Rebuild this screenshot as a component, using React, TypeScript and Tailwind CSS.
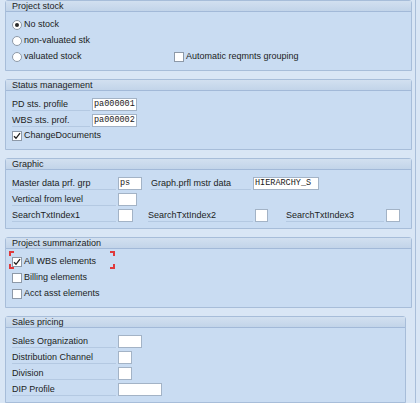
import type { ReactNode } from "react";

function Group({ title, children, className = "" }: { title: string; children: ReactNode; className?: string }) {
  return (
    <div className={`rounded-t-[3px] border border-[#a7bdd9] bg-[#c9dcf2] ${className}`}>
      <div className="h-[11px] border-b border-[#a2b9d8] bg-gradient-to-b from-[#d2e0f0] to-[#c2d4e9] pl-[6px] leading-[11px]">
        {title}
      </div>
      <div className="pb-[5px] pl-[6px] pt-[5px]">{children}</div>
    </div>
  );
}

function Row({ children, className = "" }: { children: ReactNode; className?: string }) {
  return <div className={`flex h-[16px] items-center ${className}`}>{children}</div>;
}

function Label({ text, w }: { text: string; w: number }) {
  return (
    <span
      className="mr-[2px] h-[13px] shrink-0 border-b border-[#b4c9e2] leading-[12px] whitespace-nowrap"
      style={{ width: w }}
    >
      {text}
    </span>
  );
}

function Field({ value = "", w }: { value?: string; w: number }) {
  return (
    <span
      className="h-[13px] shrink-0 border border-[#a3b3c6] bg-white pl-[1px] font-['Liberation_Mono',monospace] text-[8.5px] leading-[11px] text-[#222]"
      style={{ width: w }}
    >
      {value}
    </span>
  );
}

function Radio({ on = false }: { on?: boolean }) {
  return (
    <span className="mr-[2px] flex h-[10px] w-[10px] shrink-0 items-center justify-center rounded-full border border-[#8d99a8] bg-white">
      {on && <span className="h-[4px] w-[4px] rounded-full bg-[#2a2a2a]" />}
    </span>
  );
}

function Check({ on = false }: { on?: boolean }) {
  return (
    <span className="mr-[2px] flex h-[10px] w-[10px] shrink-0 items-center justify-center border border-[#8d99a8] bg-white">
      {on && (
        <svg width="8" height="8" viewBox="0 0 8 8">
          <path d="M1 4.2 L3 6.3 L7 1.2" fill="none" stroke="#1f1f1f" strokeWidth="1.3" />
        </svg>
      )}
    </span>
  );
}

function FocusMarks() {
  const c = "absolute h-[5px] w-[5px] border-[#e0393b]";
  return (
    <span className="pointer-events-none absolute left-[-3px] top-[-3px] h-[18px] w-[106px]">
      <span className={`${c} left-0 top-0 border-l-2 border-t-2`} />
      <span className={`${c} right-0 top-0 border-r-2 border-t-2`} />
      <span className={`${c} bottom-0 left-0 border-b-2 border-l-2`} />
      <span className={`${c} bottom-0 right-0 border-b-2 border-r-2`} />
    </span>
  );
}

export default function App() {
  return (
    <div className="h-[403px] w-[420px] overflow-hidden bg-[#d9e6f5] font-['Liberation_Sans',Arial,sans-serif] text-[9px] text-[#1c1c1c]">
      <div className="flex h-full w-[416px] flex-col gap-2 border-r border-[#a9bed9] pl-[5px] pr-[3px]">
        <Group title="Project stock">
          <Row>
            <Radio on />
            No stock
          </Row>
          <Row>
            <Radio />
            non-valuated stk
          </Row>
          <Row>
            <span className="flex w-[162px] items-center">
              <Radio />
              valuated stock
            </span>
            <Check />
            Automatic reqmnts grouping
          </Row>
        </Group>

        <Group title="Status management">
          <Row>
            <Label text="PD sts. profile" w={78} />
            <Field value="pa000001" w={45} />
          </Row>
          <Row>
            <Label text="WBS sts. prof." w={78} />
            <Field value="pa000002" w={45} />
          </Row>
          <Row>
            <Check on />
            ChangeDocuments
          </Row>
        </Group>

        <Group title="Graphic">
          <Row>
            <Label text="Master data prf. grp" w={104} />
            <Field value="ps" w={24} />
            <span className="w-[9px]" />
            <Label text="Graph.prfl mstr data" w={100} />
            <Field value="HIERARCHY_S" w={66} />
          </Row>
          <Row>
            <Label text="Vertical from level" w={104} />
            <Field w={19} />
          </Row>
          <Row>
            <Label text="SearchTxtIndex1" w={104} />
            <Field w={15} />
            <span className="w-[15px]" />
            <Label text="SearchTxtIndex2" w={105} />
            <Field w={13} />
            <span className="w-[18px]" />
            <Label text="SearchTxtIndex3" w={98} />
            <Field w={14} />
          </Row>
        </Group>

        <Group title="Project summarization">
          <Row className="relative">
            <FocusMarks />
            <Check on />
            All WBS elements
          </Row>
          <Row>
            <Check />
            Billing elements
          </Row>
          <Row>
            <Check />
            Acct asst elements
          </Row>
        </Group>

        <Group title="Sales pricing" className="mr-[6px]">
          <Row>
            <Label text="Sales Organization" w={104} />
            <Field w={24} />
          </Row>
          <Row>
            <Label text="Distribution Channel" w={104} />
            <Field w={14} />
          </Row>
          <Row>
            <Label text="Division" w={104} />
            <Field w={14} />
          </Row>
          <Row>
            <Label text="DIP Profile" w={104} />
            <Field w={44} />
          </Row>
        </Group>
      </div>
    </div>
  );
}
